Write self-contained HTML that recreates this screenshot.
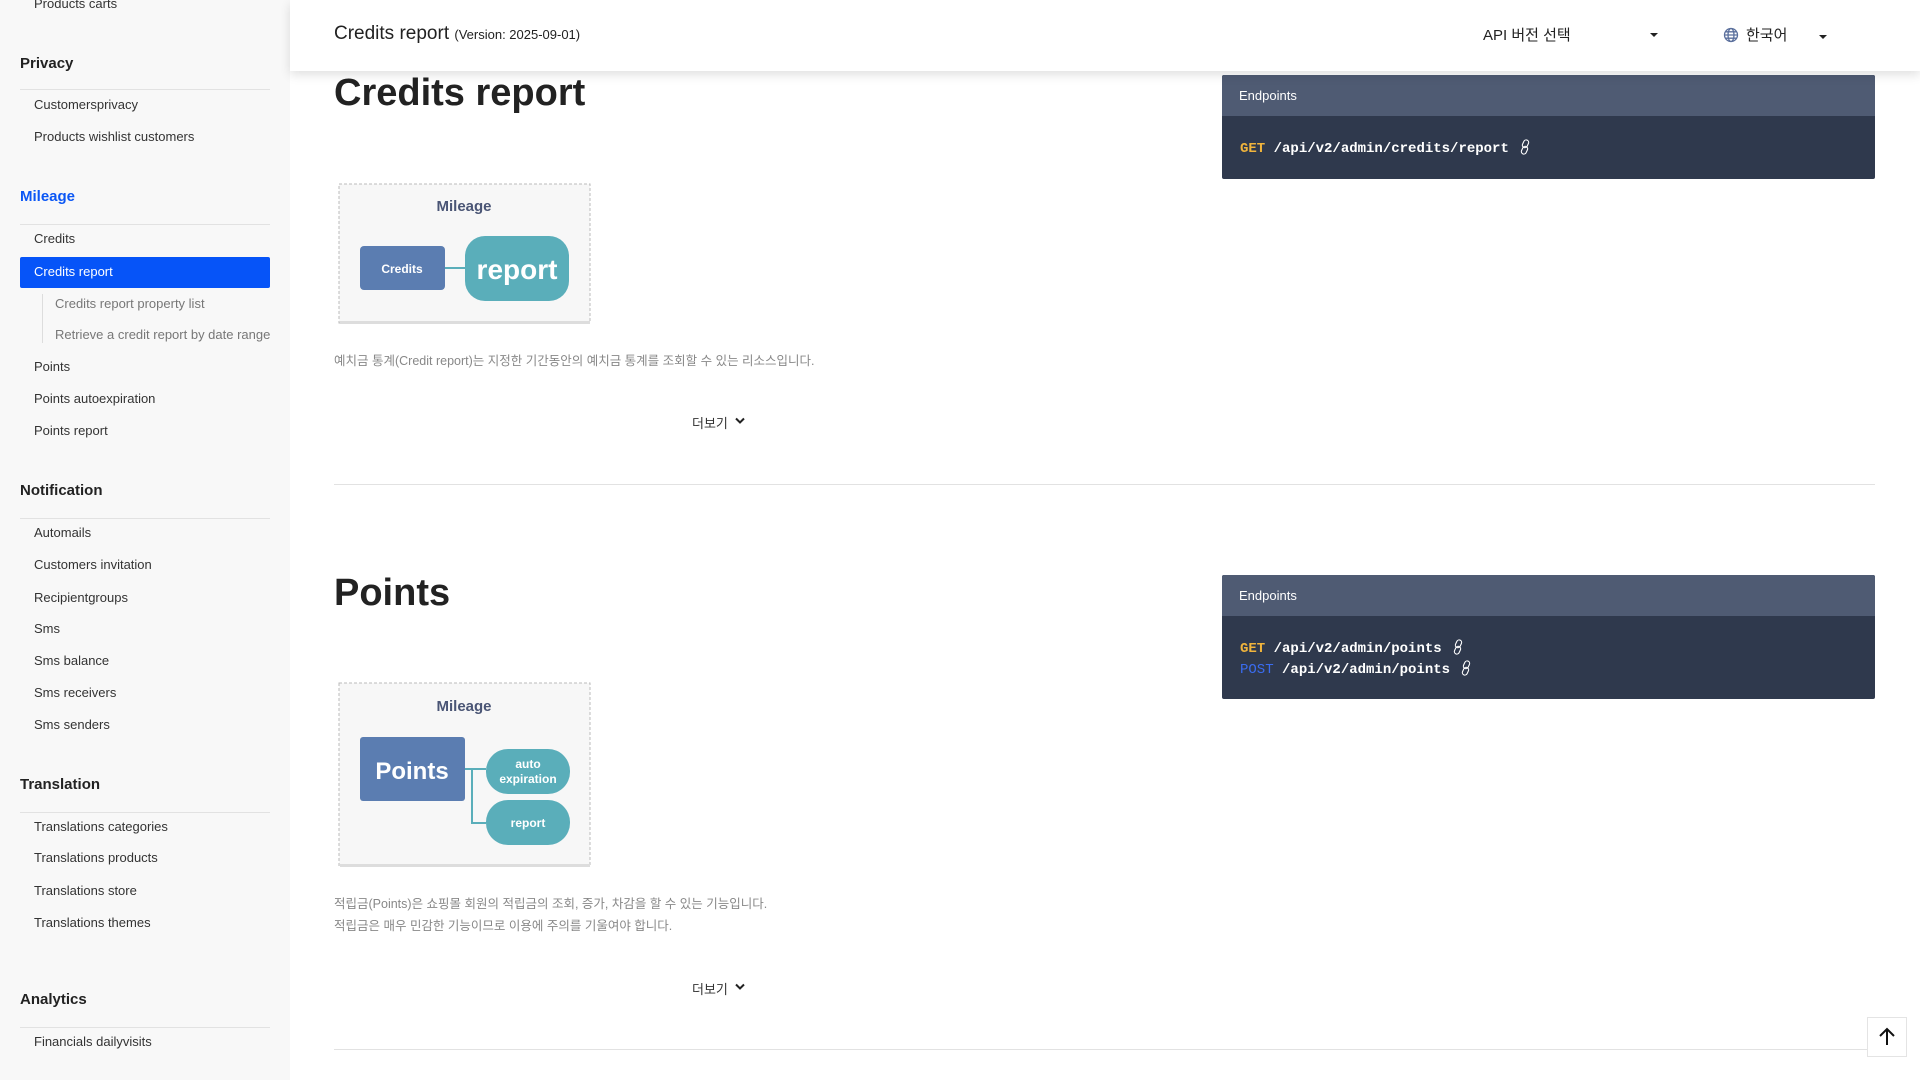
<!DOCTYPE html>
<html><head><meta charset="utf-8"><style>
*{margin:0;padding:0;box-sizing:border-box}
body{width:1920px;height:1080px;overflow:hidden;background:#fff;font-family:"Liberation Sans","Noto Sans CJK KR",sans-serif;color:#222;position:relative}
.a{position:absolute;white-space:nowrap}
#sb{position:absolute;left:0;top:0;width:290px;height:1080px;background:#f8f8f8}
.it{position:absolute;left:34px;font-size:13px;color:#333;line-height:16px;transform:translateY(-8px);white-space:nowrap}
.sub{left:55px;color:#777}
.hd{position:absolute;left:20px;font-size:15px;font-weight:bold;color:#222;transform:translateY(-9px)}
.ln{position:absolute;left:20px;width:250px;height:1px;background:#e2e2e2}
#top{position:absolute;left:290px;top:0;width:1630px;height:71px;background:#fff;box-shadow:0 4px 10px rgba(0,0,0,.12);z-index:2}
.ep{position:absolute;left:1222px;width:653px;background:#2f394d;border-radius:2px}
.eph{height:41px;background:#4f5b73;color:#fff;font-size:13px;line-height:41px;padding-left:17px;border-radius:2px 2px 0 0}
.code{font-family:"Liberation Mono",monospace;font-size:14px;font-weight:bold;color:#fff;position:absolute;left:18px;white-space:nowrap}
.code svg{vertical-align:-3px;margin-left:2px}
.h1{position:absolute;left:334px;font-size:38px;font-weight:bold;color:#222;top:0}
.desc{position:absolute;left:334px;font-size:12.5px;color:#888;line-height:22px;white-space:nowrap}
.more{position:absolute;left:692px;font-size:13px;color:#333}
.hr{position:absolute;left:334px;width:1541px;height:1px;background:#e2e2e2}
</style></head><body>
<div id="sb">
<div class="it" style="top:4px">Products carts</div>
<div class="hd" style="top:64px">Privacy</div><div class="ln" style="top:89px"></div>
<div class="it" style="top:105px">Customersprivacy</div>
<div class="it" style="top:137px">Products wishlist customers</div>
<div class="hd" style="top:197px;color:#0b57f5">Mileage</div><div class="ln" style="top:224px"></div>
<div class="it" style="top:239px">Credits</div>
<div style="position:absolute;left:20px;top:257px;width:250px;height:31px;background:#0654f8;border-radius:2px"></div>
<div class="it" style="top:272px;color:#fff">Credits report</div>
<div style="position:absolute;left:42px;top:294px;width:1px;height:49px;background:#ddd"></div>
<div class="it sub" style="top:304px">Credits report property list</div>
<div class="it sub" style="top:335px;width:215px;overflow:hidden">Retrieve a credit report by date range</div>
<div class="it" style="top:367px">Points</div>
<div class="it" style="top:399px">Points autoexpiration</div>
<div class="it" style="top:431px">Points report</div>
<div class="hd" style="top:491px">Notification</div><div class="ln" style="top:518px"></div>
<div class="it" style="top:533px">Automails</div>
<div class="it" style="top:565px">Customers invitation</div>
<div class="it" style="top:598px">Recipientgroups</div>
<div class="it" style="top:629px">Sms</div>
<div class="it" style="top:661px">Sms balance</div>
<div class="it" style="top:693px">Sms receivers</div>
<div class="it" style="top:725px">Sms senders</div>
<div class="hd" style="top:785px">Translation</div><div class="ln" style="top:812px"></div>
<div class="it" style="top:827px">Translations categories</div>
<div class="it" style="top:858px">Translations products</div>
<div class="it" style="top:891px">Translations store</div>
<div class="it" style="top:923px">Translations themes</div>
<div class="hd" style="top:1000px">Analytics</div><div class="ln" style="top:1027px"></div>
<div class="it" style="top:1042px">Financials dailyvisits</div>
</div>

<div id="top">
<div class="a" style="left:44px;top:23px;font-size:19px;color:#222">Credits report <span style="font-size:13px">(Version: 2025-09-01)</span></div>
<div class="a" style="left:1193px;top:24px;font-size:15px;color:#222">API 버전 선택</div>
<div class="a" style="left:1360px;top:33px;width:0;height:0;border-left:4px solid transparent;border-right:4px solid transparent;border-top:4px solid #222"></div>
<svg class="a" style="left:1433px;top:27px" width="16" height="16" viewBox="0 0 16 16" fill="none" stroke="#5a6f9c" stroke-width="1.3"><circle cx="8" cy="8" r="6.5"/><ellipse cx="8" cy="8" rx="3" ry="6.5"/><path d="M1.5 8h13M2.5 4.8h11M2.5 11.2h11"/></svg>
<div class="a" style="left:1456px;top:24px;font-size:15px;color:#222">한국어</div>
<div class="a" style="left:1529px;top:35px;width:0;height:0;border-left:4px solid transparent;border-right:4px solid transparent;border-top:4px solid #222"></div>
</div>

<!-- Section 1 -->
<div class="h1" style="top:72px">Credits report</div>
<div class="ep" style="top:75px;height:104px"><div class="eph">Endpoints</div>
<div class="code" style="top:64px"><span style="color:#f0b43c">GET</span> /api/v2/admin/credits/report <svg width="12" height="16" viewBox="0 0 12 16" fill="none" stroke="#fff" stroke-width="1.1"><rect x="4" y="0.8" width="5" height="8" rx="2.5" transform="rotate(25 6.5 4.8)"/><rect x="3" y="7.2" width="5" height="8" rx="2.5" transform="rotate(25 5.5 11.2)"/></svg></div></div>

<svg class="a" style="left:336px;top:181px" width="260" height="148">
<rect x="3" y="3" width="251" height="139" fill="#f7f7f7" stroke="#bbb" stroke-dasharray="3,2"/>
<rect x="4" y="140" width="250" height="3" fill="#ddd"/>
<text x="128" y="30" text-anchor="middle" font-size="15" font-weight="bold" fill="#4a5575" font-family="Liberation Sans,sans-serif">Mileage</text>
<rect x="24" y="65" width="85" height="44" rx="4" fill="#5b7db1"/>
<text x="66" y="92" text-anchor="middle" font-size="12" font-weight="bold" fill="#fff" font-family="Liberation Sans,sans-serif">Credits</text>
<line x1="109" y1="87" x2="129" y2="87" stroke="#5aaeba" stroke-width="2"/>
<rect x="129" y="55" width="104" height="65" rx="20" fill="#5aaeba"/>
<text x="181" y="98" text-anchor="middle" font-size="28" font-weight="bold" fill="#fff" font-family="Liberation Sans,sans-serif">report</text>
</svg>
<div class="desc" style="top:350px">예치금 통계(Credit report)는 지정한 기간동안의 예치금 통계를 조회할 수 있는 리소스입니다.</div>
<div class="more" style="top:413px">더보기</div>
<svg class="a" style="left:735px;top:417px" width="10" height="8"><path d="M1 1.5L5 5.5L9 1.5" stroke="#222" stroke-width="2" fill="none"/></svg>
<div class="hr" style="top:484px"></div>

<!-- Section 2 -->
<div class="h1" style="top:572px">Points</div>
<div class="ep" style="top:575px;height:124px"><div class="eph">Endpoints</div>
<div class="code" style="top:64px"><span style="color:#f0b43c">GET</span> /api/v2/admin/points <svg width="12" height="16" viewBox="0 0 12 16" fill="none" stroke="#fff" stroke-width="1.1"><rect x="4" y="0.8" width="5" height="8" rx="2.5" transform="rotate(25 6.5 4.8)"/><rect x="3" y="7.2" width="5" height="8" rx="2.5" transform="rotate(25 5.5 11.2)"/></svg></div>
<div class="code" style="top:85px"><span style="color:#3a6cf0;font-weight:normal">POST</span> /api/v2/admin/points <svg width="12" height="16" viewBox="0 0 12 16" fill="none" stroke="#fff" stroke-width="1.1"><rect x="4" y="0.8" width="5" height="8" rx="2.5" transform="rotate(25 6.5 4.8)"/><rect x="3" y="7.2" width="5" height="8" rx="2.5" transform="rotate(25 5.5 11.2)"/></svg></div></div>

<svg class="a" style="left:336px;top:680px" width="260" height="192">
<rect x="3" y="3" width="251" height="183" fill="#f7f7f7" stroke="#bbb" stroke-dasharray="3,2"/>
<rect x="4" y="184" width="250" height="3" fill="#ddd"/>
<text x="128" y="31" text-anchor="middle" font-size="15" font-weight="bold" fill="#4a5575" font-family="Liberation Sans,sans-serif">Mileage</text>
<rect x="24" y="57" width="105" height="64" rx="3" fill="#5b7db1"/>
<text x="76" y="99" text-anchor="middle" font-size="24" font-weight="bold" fill="#fff" font-family="Liberation Sans,sans-serif">Points</text>
<path d="M129 89H150M136 89V143H150" stroke="#5aaeba" stroke-width="2" fill="none"/>
<rect x="150" y="69" width="84" height="45" rx="22" fill="#5aaeba"/>
<text x="192" y="88" text-anchor="middle" font-size="12" font-weight="bold" fill="#fff" font-family="Liberation Sans,sans-serif">auto</text>
<text x="192" y="103" text-anchor="middle" font-size="12" font-weight="bold" fill="#fff" font-family="Liberation Sans,sans-serif">expiration</text>
<rect x="150" y="120" width="84" height="45" rx="22" fill="#5aaeba"/>
<text x="192" y="147" text-anchor="middle" font-size="12" font-weight="bold" fill="#fff" font-family="Liberation Sans,sans-serif">report</text>
</svg>
<div class="desc" style="top:893px">적립금(Points)은 쇼핑몰 회원의 적립금의 조회, 증가, 차감을 할 수 있는 기능입니다.<br>적립금은 매우 민감한 기능이므로 이용에 주의를 기울여야 합니다.</div>
<div class="more" style="top:979px">더보기</div>
<svg class="a" style="left:735px;top:983px" width="10" height="8"><path d="M1 1.5L5 5.5L9 1.5" stroke="#222" stroke-width="2" fill="none"/></svg>
<div class="hr" style="top:1049px"></div>

<div class="a" style="left:1867px;top:1017px;width:40px;height:40px;background:#fff;border:1px solid #e4e4e4">
<svg width="38" height="38" viewBox="0 0 38 38"><path d="M19 27V11M12 18L19 11L26 18" stroke="#111" stroke-width="2" fill="none"/></svg></div>
</body></html>
